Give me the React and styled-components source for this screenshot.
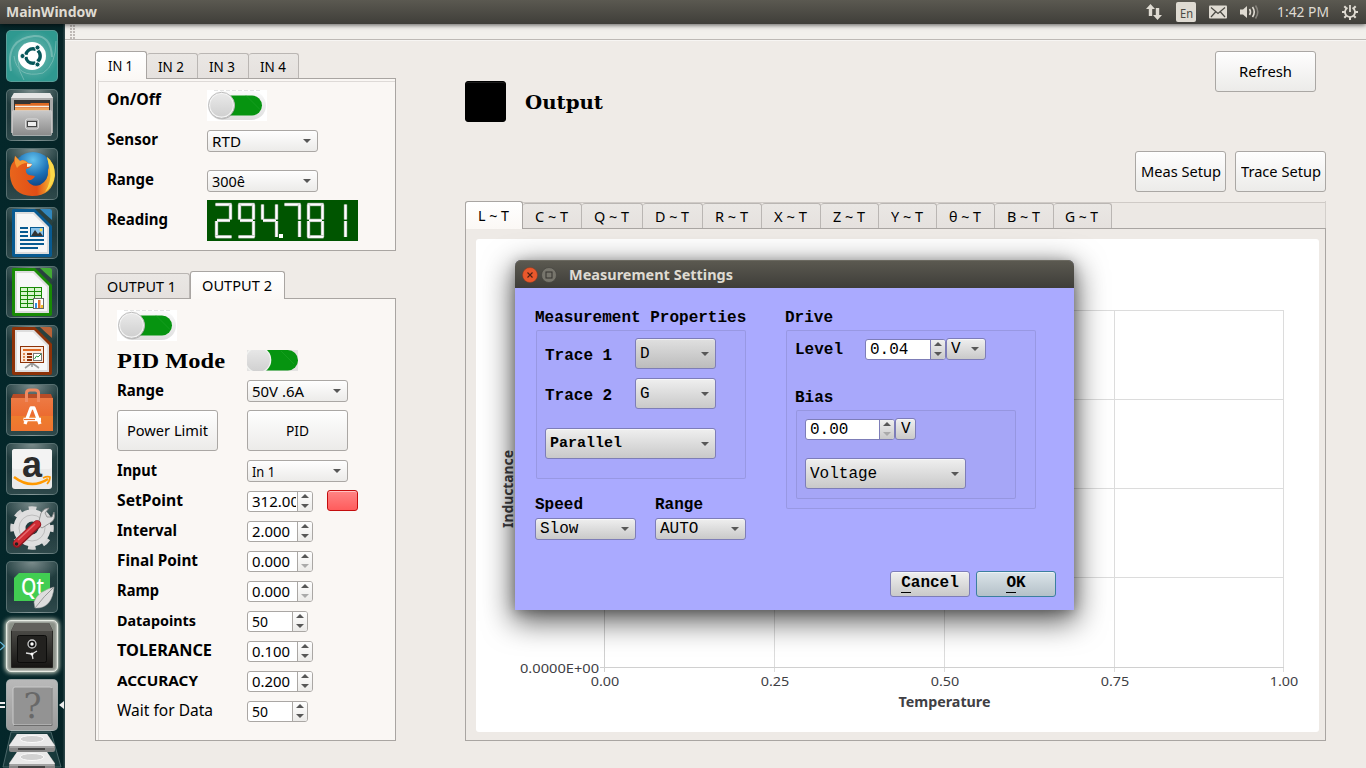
import React, { useLayoutEffect, useRef, useState } from "react";
import styled, { createGlobalStyle, css } from "styled-components";

const ui = `"Noto Sans", "Open Sans", sans-serif`;
const mono = `"Liberation Mono", monospace`;

const GlobalStyle = createGlobalStyle`
  * { box-sizing: border-box; }
  body { margin: 0; background: #efebe7; font-family: ${ui}; font-size: 14.5px; color: #000; overflow: hidden; }
  svg { display: block; flex: none; }
`;

/* ---------- text that is fitted to a given width ---------- */
const FitBox = styled.span`
  display: block;
  flex: none;
  width: ${(p) => p.$w}px;
  white-space: nowrap;
  line-height: 20px;
  font-family: ${(p) => p.$font || "inherit"};
  font-size: ${(p) => (p.$size ? p.$size + "px" : "inherit")};
  font-weight: ${(p) => (p.$bold ? 700 : "inherit")};
  margin-top: ${(p) => p.$dy || 0}px;
`;
const FitInner = styled.span`
  display: inline-block;
  transform-origin: 0 50%;
`;
function Fit({ w, children, bold, size, font, dy }) {
  const ref = useRef(null);
  const [k, setK] = useState(1);
  useLayoutEffect(() => {
    setK(w / ref.current.getBoundingClientRect().width);
  }, [w]);
  return (
    <FitBox $w={w} $bold={bold} $size={size} $font={font} $dy={dy}>
      <FitInner ref={ref} style={{ transform: `scaleX(${k})` }}>{children}</FitInner>
    </FitBox>
  );
}

/* ---------- frame of the desktop ---------- */
const Screen = styled.div`
  width: 1366px;
  height: 768px;
  display: flex;
  flex-direction: column;
  position: relative;
  overflow: hidden;
`;
const TopBar = styled.header`
  height: 24px;
  flex: none;
  display: flex;
  align-items: center;
  padding: 0 8px 0 6px;
  color: #dfdbd2;
  background: linear-gradient(#5b5951, #3f3e39);
  box-shadow: 0 1px 5px rgba(0, 0, 0, 0.65);
  z-index: 2;
`;
const Tray = styled.div`
  margin-left: auto;
  display: flex;
  align-items: center;
`;
const Lang = styled.span`
  width: 20px;
  height: 20px;
  margin: 0 13px 0 13px;
  border-radius: 2px;
  background: #dfdbd2;
  color: #4a4943;
  display: flex;
  justify-content: center;
`;
const SoundIcon = styled.svg`
  margin-left: 13px;
`;
const Clock = styled.div`
  margin: 0 13px 0 17px;
`;
const Desk = styled.div`
  flex: 1;
  display: flex;
  min-height: 0;
`;
const Launcher = styled.nav`
  width: 65px;
  flex: none;
  padding: 6px 0 0 0;
  background: linear-gradient(90deg, #04272a, #062427 96%, #334b4d);
  display: flex;
  flex-direction: column;
  gap: 7px;
  overflow: hidden;
`;
const tileBg = {
  dash: "radial-gradient(circle at 50% 50%, #79bdb6, #2f9990 75%)",
  unknown: "linear-gradient(#b9b9b9, #9b9b9b)",
  plain: "radial-gradient(ellipse 60% 42% at 50% 0, #7b8c8c, rgba(60,85,86,.25) 100%), linear-gradient(#183638, #173235 55%, #2a4547)",
};
const Tile = styled.div`
  width: 52px;
  height: 52px;
  flex: none;
  margin-left: 6px;
  border-radius: 5px;
  border: 1px solid ${(p) => (p.$active ? "#e7ece4" : "rgba(150,170,170,.42)")};
  background: ${(p) => tileBg[p.$kind] || tileBg.plain};
  display: flex;
  align-items: center;
  justify-content: center;
  position: relative;
  ${(p) => p.$active && css`background: #8b9188; box-shadow: 0 0 4px 1px #d9dfd0, inset 0 0 3px #fff;`}
`;
const Stack = styled.div`
  margin-top: -7px;
`;
const Marker = styled.svg`
  position: absolute;
  top: 19px;
  ${(p) => (p.$right ? "right: -8px;" : "left: -7px;")}
`;

/* ---------- main window ---------- */
const Main = styled.main`
  flex: 1;
  display: flex;
  flex-direction: column;
  background: #efebe7;
`;
const ToolStrip = styled.div`
  height: 16px;
  flex: none;
  background: #f2f0ec;
  border-bottom: 1px solid #bdb9b5;
  box-shadow: 0 1px 0 #f7f5f3;
  padding: 1px 5px;
`;
const Grip = styled.div`
  width: 5px;
  height: 14px;
  background: radial-gradient(circle at 1px 1px, #bdb9b5 0.7px, transparent 0.9px) 0 0 / 3px 3px;
`;
const Content = styled.div`
  flex: 1;
  display: flex;
  padding: 11px 40px 27px 30px;
`;
const Side = styled.section`
  width: 301px;
  flex: none;
  display: flex;
  flex-direction: column;
  gap: 20px;
`;
const TabBox = styled.div`
  display: flex;
  flex-direction: column;
  height: ${(p) => p.$h}px;
`;
const TabBar = styled.div`
  display: flex;
  align-items: flex-end;
  height: 28px;
  flex: none;
  margin-bottom: -1px;
  ${(p) => p.$wide && css`
    background: linear-gradient(#cfcac6, #cfcac6) 0 1px / 100% 1px no-repeat, linear-gradient(#ece8e4, #ece8e4) 0 2px / 100% 26px no-repeat;
    border-right: 1px solid #d3cfcb;
  `}
`;
const TabItem = styled.div`
  width: ${(p) => p.$w}px;
  height: 26px;
  flex: none;
  display: flex;
  justify-content: center;
  align-items: center;
  padding: 2px 2px 0 0;
  border: 1px solid #bab6b3;
  border-left-width: ${(p) => (p.$first ? 1 : 0)}px;
  border-bottom-color: #a9a5a2;
  border-radius: 3px 3px 0 0;
  background: linear-gradient(#eae7e4, #e5e1de);
  ${(p) => p.$on && css`
    height: 28px;
    padding: 1px 2px 0 0;
    border: 1px solid #a9a5a2;
    border-bottom: 0;
    background: linear-gradient(#fff, #fbf8f5);
    position: relative;
    z-index: 1;
  `}
`;
const Pane = styled.div`
  flex: 1;
  border: 1px solid #a9a5a2;
  background: ${(p) => (p.$grey ? "#eeeae6" : "#faf7f4")};
  padding: ${(p) => p.$pad || "1px 0 0 2px"};
`;
const Inset = styled.div`
  border-left: 1px solid #dedad7;
  height: 100%;
  padding-left: ${(p) => p.$l}px;
  ${(p) => p.$top && css`background: linear-gradient(#dedad7, #dedad7) 0 1px / 100% 1px no-repeat;`}
`;
const Row = styled.div`
  height: ${(p) => p.$h}px;
  display: grid;
  grid-template-columns: ${(p) => p.$label}px auto auto;
  justify-content: start;
  align-items: center;
`;
const ButtonRow = styled(Row)`
  align-items: start;
  padding-top: 4px;
`;
const SwitchRow = styled.div`
  height: 46px;
  padding-top: 10px;
`;
const SwitchShift = styled.div`
  padding-top: ${(p) => p.$y || 0}px;
  padding-bottom: ${(p) => p.$b || 0}px;
`;

/* ---------- controls ---------- */
const faces = {
  light: "linear-gradient(#fefefe, #ecebe9)",
  grey: "linear-gradient(#efefef, #c9c9c9)",
  dark: "linear-gradient(#e0e0e0, #bcbcbc)",
  ok: "linear-gradient(#dbe4e9, #b4c0c8)",
  red: "linear-gradient(#ff8585, #ff5c5c)",
  black: "#000",
};
const Face = styled.div`
  width: ${(p) => p.$w}px;
  height: ${(p) => p.$h}px;
  flex: none;
  display: flex;
  align-items: center;
  border: 1px solid ${(p) => p.$edge || "#aaa7a4"};
  border-radius: 3px;
  background: ${(p) => faces[p.$face || "light"]};
  box-shadow: inset 0 1px 0 rgba(255, 255, 255, ${(p) => (p.$face === "black" ? 0.1 : 0.5)});
`;
const Combo = styled(Face)`
  justify-content: space-between;
  padding: 0 6px 0 4px;
`;
const Push = styled(Face)`
  justify-content: center;
`;
const Lamp = styled(Face)`
  margin: 0 0 1px 14px;
`;
const Down = styled.i`
  flex: none;
  border: 4px solid transparent;
  border-bottom: 0;
  border-top-color: #575757;
`;
const Up = styled.i`
  flex: none;
  border: 4px solid transparent;
  border-top: 0;
  border-bottom-color: #575757;
`;
const DownDim = styled(Down)`
  border-top-color: #aaa;
`;
const SpinBox = styled(Face)`
  background: #fff;
  overflow: hidden;
`;
const SpinText = styled.div`
  flex: 1;
  min-width: 0;
  overflow: hidden;
  padding-left: 4px;
  margin-right: 1px;
`;
const SpinButtons = styled.div`
  width: 15px;
  height: 100%;
  padding: 0 0 1px 0;
  border-left: 1px solid ${(p) => p.$edge || "#aaa7a4"};
  background: ${(p) => faces[p.$face || "light"]};
  display: flex;
  flex-direction: column;
  align-items: center;
  justify-content: center;
  gap: 6px;
`;

function Select({ w, h = 22, tw, face, edge, children, size, font, bold, dy }) {
  return (
    <Combo $w={w} $h={h} $face={face} $edge={edge}>
      <Fit w={tw} size={size} font={font} bold={bold} dy={dy}>{children}</Fit>
      <Down />
    </Combo>
  );
}
function Spin({ w, tw, face, edge, font, size, dim, children, dy = 1 }) {
  return (
    <SpinBox $w={w} $h={21} $edge={edge}>
      <SpinText><Fit w={tw} font={font} size={size} dy={dy}>{children}</Fit></SpinText>
      <SpinButtons $face={face} $edge={edge}><Up />{dim ? <DownDim /> : <Down />}</SpinButtons>
    </SpinBox>
  );
}
function Toggle() {
  return (
    <svg width="60" height="31" viewBox="0 0 60 31">
      <defs>
        <linearGradient id="knob" x1="0" y1="0" x2="0" y2="1"><stop offset="0" stopColor="#e9e9e9" /><stop offset="1" stopColor="#d0d0d0" /></linearGradient>
        <linearGradient id="rim" x1="0" y1="0" x2="0" y2="1"><stop offset="0" stopColor="#fafafa" /><stop offset="1" stopColor="#dedede" /></linearGradient>
      </defs>
      <rect width="60" height="31" fill="#fff" />
      <rect x="1" y="1" width="58" height="29" rx="14.5" fill="url(#rim)" />
      <path d="M7 .5H54" stroke="#e4e4e4" strokeDasharray="4 2" />
      <rect x="14" y="5.5" width="41" height="20" rx="10" fill="#069410" />
      <path d="M39 5.5l14 14" stroke="#1da025" strokeWidth=".7" />
      <circle cx="15" cy="16.3" r="13" fill="#777" opacity=".4" />
      <circle cx="14.5" cy="15.300" r="13" fill="#f4f4f4" stroke="#bdbdbd" />
      <circle cx="14.5" cy="15.300" r="11.300" fill="url(#knob)" />
    </svg>
  );
}
function SmallToggle() {
  return (
    <svg width="51" height="21" viewBox="0 0 51 21">
      <rect width="51" height="21" fill="#e4e3e2" />
      <rect x="10" y="0" width="41" height="20.5" rx="10.2" fill="#069410" />
      <path d="M34 1l13 13" stroke="#1da025" strokeWidth=".7" />
      <circle cx="11" cy="10" r="13.300" fill="#f1f3f1" />
      <circle cx="11" cy="10" r="12" fill="url(#knob)" />
    </svg>
  );
}

/* Seven segment readout: a top, b/c right, d bottom, e/f left, g middle */
const segmentsOf = { 0: "abcdef", 1: "bc", 2: "abged", 3: "abgcd", 4: "fgbc", 5: "afgcd", 6: "afgedc", 7: "abc", 8: "abcdefg", 9: "abcdfg" };
const segmentLines = {
  a: [0.5, 1.5, 16.5, 1.5], b: [15.5, 1.5, 15.5, 16.5], c: [15.5, 18, 15.5, 34], d: [0.5, 33.8, 16.5, 33.8],
  e: [1.5, 18, 1.5, 34], f: [1.5, 1.5, 1.5, 16.5], g: [2, 17.4, 15, 17.4],
};
function Readout({ value }) {
  let n = -1;
  return (
    <svg width="151" height="41" role="img" aria-label={value}>
      <rect width="151" height="41" fill="#005500" />
      {value.split("").map((ch, i) => {
        if (ch === ".") return <rect key={i} x={8 + 23 * n + 18} y="34" width="4" height="4" fill="#fff" />;
        n += 1;
        return (
          <g key={i} transform={`translate(${8 + 23 * n} 3)`}>
            {segmentsOf[ch].split("").map((s) => {
              const [x1, y1, x2, y2] = segmentLines[s];
              return (
                <g key={s}>
                  <line x1={x1} y1={y1} x2={x2} y2={y2} stroke="#a3aba3" strokeWidth="3.4" />
                  <line x1={x1} y1={y1} x2={x2} y2={y2} stroke="#fff" strokeWidth="2.2" />
                </g>
              );
            })}
          </g>
        );
      })}
    </svg>
  );
}

/* ---------- right side ---------- */
const Work = styled.section`
  flex: 1;
  margin-left: 69px;
  display: flex;
  flex-direction: column;
`;
const Head = styled.div`
  height: 100px;
  flex: none;
  display: flex;
  align-items: flex-start;
`;
const OutputMark = styled.div`
  display: flex;
  align-items: center;
  gap: 19px;
  padding-top: 30px;
  flex: 1;
`;
const RefreshSlot = styled.div`
  margin-right: 10px;
`;
const Setup = styled.div`
  height: 50px;
  flex: none;
  display: flex;
  justify-content: flex-end;
  gap: 9px;
`;

const gridX = [604.5, 774.5, 944.5, 1114.5, 1283.5];
const gridY = [310.5, 399.5, 488.5, 577.5, 667.5];
const ticks = ["0.00", "0.25", "0.50", "0.75", "1.00"];
function Chart() {
  return (
    <svg width="843" height="493" viewBox="476 239 843 493" fontFamily={ui} fontSize="13.4" fill="#404044">
      <rect x="476" y="239" width="843" height="493" rx="3" fill="#fff" />
      <g stroke="#dcdcdc" strokeWidth="1">
        {gridX.map((x) => <line key={x} x1={x} x2={x} y1="310" y2="672" />)}
        {gridY.map((y) => <line key={y} x1="600" x2="1284" y1={y} y2={y} />)}
        <path d="M600 667.5H1284M604.5 310V672" stroke="#d0d0d0" />
      </g>
      {ticks.map((t, i) => <text key={t} x={gridX[i] + 0.5} y="686" textAnchor="middle" textLength="28.5" lengthAdjust="spacingAndGlyphs">{t}</text>)}
      <text x="520" y="673" textLength="79" lengthAdjust="spacingAndGlyphs">0.0000E+00</text>
      <text x="944.5" y="707" fontWeight="700" textAnchor="middle" textLength="92" lengthAdjust="spacingAndGlyphs">Temperature</text>
      <text transform="translate(513 489) rotate(-90)" fontWeight="700" textAnchor="middle" textLength="78" lengthAdjust="spacingAndGlyphs">Inductance</text>
    </svg>
  );
}

/* ---------- dialog ---------- */
const Dialog = styled.div`
  position: absolute;
  left: 515px;
  top: 260px;
  width: 559px;
  height: 350px;
  z-index: 3;
  border-radius: 6px 6px 0 0;
  background: #aaaaff;
  box-shadow: 0 9px 30px 2px rgba(0, 0, 0, 0.66), 0 2px 12px rgba(0, 0, 0, 0.25);
  font-family: ${mono};
  font-size: 16px;
`;
const TitleBar = styled.div`
  height: 28px;
  display: flex;
  align-items: center;
  padding: 1px 0 0 7px;
  gap: 3px;
  color: #dfdbd2;
  border-radius: 6px 6px 0 0;
  background: linear-gradient(#5c5a51, #3e3d39);
  box-shadow: inset 0 1px 0 #6b6960;
  font-family: ${ui};
`;
const Title = styled.div`
  margin-left: 9px;
`;
const DialogBody = styled.div`
  height: 322px;
  display: flex;
  flex-direction: column;
  justify-content: space-between;
  padding: 19px 18px 13px 20px;
`;
const Columns = styled.div`
  display: grid;
  grid-template-columns: 211px 251px;
  column-gap: 39px;
`;
const Caption = styled.div`
  height: 20px;
  line-height: ${(p) => p.$lh || 22}px;
  font-weight: 700;
  white-space: nowrap;
`;
const Group = styled.div`
  width: ${(p) => p.$w}px;
  height: ${(p) => p.$h}px;
  margin: 3px 0 0 1px;
  padding: ${(p) => p.$pad};
  border: 1px solid rgba(90, 90, 130, 0.2);
  border-radius: 2px;
  background: rgba(100, 100, 150, 0.035);
`;
const Line = styled.div`
  display: flex;
  align-items: center;
  height: ${(p) => p.$h}px;
`;
const LineLabel = styled(Caption)`
  width: ${(p) => p.$w}px;
`;
const Pair = styled.div`
  display: flex;
  gap: ${(p) => p.$gap}px;
  margin-top: ${(p) => p.$top}px;
`;
const Actions = styled.div`
  display: flex;
  justify-content: flex-end;
  gap: 6px;
  font-weight: 700;
`;
const Key = styled.span`
  border-bottom: 1px solid #000;
  padding-bottom: 0;
`;
const Word = styled.span`
  line-height: 18px;
  margin-top: -2px;
`;
const purple = "#7d7db8";

/* ---------- launcher drawings ---------- */
function Dash() {
  return (
    <svg width="50" height="50" viewBox="0 0 50 50">
      <g fill="none" stroke="#a3d1cb" opacity=".5"><path d="M4 40Q-2 8 27 5Q44 4 45 26" strokeWidth="2" /><path d="M7 25Q10 48 36 42Q49 34 49 10M17 49Q5 30 18 12" /></g>
      <circle cx="25" cy="25" r="14" fill="#fff" />
      <circle cx="26" cy="25" r="7.2" fill="none" stroke="#07575a" strokeWidth="3.4" strokeDasharray="13 2.1" strokeDashoffset="6.5" />
      <g fill="#07575a" stroke="#fff" strokeWidth=".9"><circle cx="15.5" cy="25" r="2.5" /><circle cx="30.5" cy="16.5" r="2.5" /><circle cx="30.5" cy="33.5" r="2.5" /></g>
    </svg>
  );
}
function Files() {
  return (
    <svg width="50" height="50" viewBox="0 0 50 50">
      <defs><linearGradient id="cab" x1="0" y1="0" x2="0" y2="1"><stop offset="0" stopColor="#c9c9c9" /><stop offset="1" stopColor="#8a8a8a" /></linearGradient></defs>
      <path d="M7 3H43L46 8V43H4V8Z" fill="#aaa" /><path d="M7 3H43L46 8H4Z" fill="#e6e6e6" />
      <rect x="7" y="10" width="36" height="13" fill="#343434" />
      <path d="M8 14h15l1-1h18v12H8z" fill="#df6a23" /><path d="M8 16.500H42" stroke="#f5efe5" strokeWidth="1.4" /><path d="M8 18H42V23H8Z" fill="#f0a45c" />
      <rect x="5.500" y="20.500" width="39" height="25" rx="1" fill="url(#cab)" stroke="#d9d9d9" strokeWidth=".6" />
      <rect x="18.500" y="29" width="13" height="10" rx="2" fill="#aaa" stroke="#ddd" /><rect x="20.500" y="31.500" width="9" height="5" fill="#eee" stroke="#444" />
    </svg>
  );
}
function Firefox() {
  return (
    <svg width="50" height="50" viewBox="0 0 50 50">
      <defs>
        <radialGradient id="globe" cx=".5" cy=".2" r=".8"><stop offset="0" stopColor="#63c3ee" /><stop offset=".5" stopColor="#1c6fb5" /><stop offset="1" stopColor="#0b2f6b" /></radialGradient>
        <linearGradient id="fox" x1="0" y1="0" x2="1" y2="0"><stop offset="0" stopColor="#e8651c" /><stop offset=".6" stopColor="#e24e16" /><stop offset="1" stopColor="#fbd23a" /></linearGradient>
      </defs>
      <circle cx="26" cy="23" r="20" fill="url(#globe)" />
      <path d="M40 8Q48 14 48 26Q46 47 25 47Q5 46 3 27Q2 17 7 12L8 7L13 12Q18 10 21 14L25 15Q24 19 19 20Q18 24 22 26L28 27Q26 32 20 31Q25 39 33 36Q42 31 41 21Q43 18 40 8Z" fill="url(#fox)" />
      <path d="M40 8Q48 14 47.500 27Q46 37 38 43Q45 32 43 21Z" fill="#fbd94a" />
      <path d="M8 7L13 12Q17 10 21 14Q14 14 10 19Q7 14 8 7Z" fill="#f79a34" />
      <path d="M20 14.500L25 15Q24 18 20 18Z" fill="#fff0d0" />
    </svg>
  );
}
function Office({ c, d, kind }) {
  return (
    <svg width="50" height="50" viewBox="0 0 50 50">
      <path d="M5 2Q5 1 7 1H29L45 17V47Q45 49 43 49H7Q5 49 5 47Z" fill={c} />
      <path d="M8 4H27L42 19V46H8Z" fill="#ddd" /><path d="M10 6H26L40 20V44H10Z" fill="#f7f7f7" />
      <path d="M28 1H43Q45 1 45 3V18Z" fill="#29413f" />
      <path d="M33 1H43Q45 1 45 3V12Q38 6 33 1Z" fill={d} />
      {kind === "writer" && <g><path d="M13 20h8M13 24h8M13 28h8M13 32h24M13 36h24M13 40h18" stroke={c} strokeWidth="2" /><rect x="23.500" y="19.500" width="13" height="9" fill="#8bc3ea" stroke={c} /><path d="M24 28l4-6 3 4 2-2 3 4z" fill="#333" /><circle cx="34" cy="22" r="1.400" fill="#ffdc4a" /></g>}
      {kind === "calc" && <g><rect x="13.500" y="20.500" width="21" height="20" fill="#d8f5cd" stroke={c} /><path d="M13 24.500h22M13 28.500h22M13 32.500h22M13 36.500h22M20.500 20v21M27.500 20v21" stroke={c} /><rect x="26.500" y="31.500" width="10" height="10" fill="#fff" stroke="#666" /><path d="M28 36h2v5h-2z" fill="#2f8de0" /><path d="M31 33h2.500v8H31z" fill="#e0702a" /><path d="M34 38h2v3h-2z" fill="#f5bf2b" /></g>}
      {kind === "impress" && <g><path d="M25 37l-7 5M25 37l7 5M25 36v5" stroke="#999" strokeWidth="1.600" /><rect x="13.500" y="20.500" width="23" height="16" fill="#fbe9dc" stroke={c} /><path d="M16 24h18" stroke="#df6a23" strokeWidth="2" /><path d="M16 28h2M16 31h2M16 34h2" stroke="#df8a53" strokeWidth="2" /><path d="M20 28h5M20 31h5M20 34h5" stroke={c} strokeWidth="2" /><rect x="26.500" y="27.500" width="8" height="7" fill="#fff" stroke="#777" /><path d="M27.500 33l2-3 1.500 1 3-3" fill="none" stroke="#1f9a3c" /></g>}
    </svg>
  );
}
function Software() {
  return (
    <svg width="50" height="50" viewBox="0 0 50 50">
      <defs><linearGradient id="bag" x1="0" y1="0" x2="0" y2="1"><stop offset="0" stopColor="#ed7a44" /><stop offset=".55" stopColor="#ec6b30" /><stop offset=".56" stopColor="#ee7d2e" /><stop offset="1" stopColor="#ee7430" /></linearGradient></defs>
      <path d="M6 9H44L46 14H4Z" fill="#b74c27" /><rect x="4" y="13" width="42" height="33" fill="url(#bag)" />
      <path d="M19.500 17V8Q19.500 5 23 5H28Q31.500 5 31.500 8V17" fill="none" stroke="#ef8b63" strokeWidth="3" />
      <path d="M18 39L24 23H27L33 39M16.500 34.500H34" fill="none" stroke="#fff" strokeWidth="3.300" strokeLinejoin="round" /><path d="M17 34.500H28" stroke="#ec7230" strokeWidth="1.200" />
    </svg>
  );
}
function Amazon() {
  return (
    <svg width="50" height="50" viewBox="0 0 50 50">
      <rect x="5" y="5" width="40" height="40" rx="3" fill="#eaeaea" /><rect x="5" y="5" width="40" height="20" rx="3" fill="#f3f3f3" />
      <text x="25" y="33" textAnchor="middle" fontFamily={`"Liberation Sans", sans-serif`} fontWeight="700" fontSize="36" fill="#2b2b2b">a</text>
      <path d="M7 33Q24 46 41 35" fill="none" stroke="#f90" strokeWidth="2.600" /><path d="M36 34Q40 32 43 33Q43 37 40 40" fill="none" stroke="#f90" strokeWidth="1.700" />
    </svg>
  );
}
function Tools() {
  return (
    <svg width="50" height="50" viewBox="0 0 50 50">
      <circle cx="25" cy="25" r="18.800" fill="none" stroke="#d6d6d6" strokeWidth="6" strokeDasharray="7.380 7.380" strokeDashoffset="3.690" />
      <circle cx="25" cy="25" r="12.500" fill="none" stroke="#dfdfdf" strokeWidth="12" />
      <circle cx="25" cy="25" r="13" fill="none" stroke="#bdbdbd" />
      <path d="M31 22L34 10Q37 5 42 5L38 10L40 14L45 14L47 9Q49 17 43 20L35 25Z" fill="#ddd" stroke="#858585" strokeWidth=".8" />
      <path d="M10 40.500L30 21.500" stroke="#8e1720" strokeWidth="8.500" strokeLinecap="round" /><path d="M10 40L30 21" stroke="#ce2c34" strokeWidth="6.500" strokeLinecap="round" />
      <path d="M11 37L28 21" stroke="#e66a6e" strokeWidth="1.500" /><circle cx="9.500" cy="41" r="1.800" fill="#222" />
    </svg>
  );
}
function QtIcon() {
  return (
    <svg width="50" height="50" viewBox="0 0 50 50">
      <path d="M12 11H43V34L38 39H7V16Z" fill="#41cd52" />
      <text x="14" y="33" fontFamily={ui} fontWeight="500" fontSize="23" textLength="23" lengthAdjust="spacingAndGlyphs" fill="#fff">Qt</text>
      <path d="M47 25Q31 29 27 40L28 46Q45 47 47 25Z" fill="#ddd" stroke="#aaa" strokeWidth=".5" /><path d="M47 25Q37 34 28 46" fill="none" stroke="#999" />
    </svg>
  );
}
function Safe() {
  return (
    <svg width="50" height="50" viewBox="0 0 50 50">
      <defs><linearGradient id="safe" x1="0" y1="0" x2="0" y2="1"><stop offset="0" stopColor="#4a4945" /><stop offset="1" stopColor="#171614" /></linearGradient></defs>
      <path d="M8 2H42L46 10V46Q46 47 45 47H5Q4 47 4 46V10Z" fill="#282724" /><path d="M8 2H42L46 10H4Z" fill="#62615d" />
      <rect x="5" y="10" width="40" height="36" fill="url(#safe)" /><rect x="10.500" y="14.500" width="29" height="27" rx="2" fill="#22211f" stroke="#0c0c0b" />
      <circle cx="25" cy="23" r="4" fill="#111" stroke="#ccc" strokeWidth="1.300" /><circle cx="25" cy="23" r="1.700" fill="#fff" />
      <path d="M25 33L19 32M25 33L30 30M25 33L26 38" stroke="#ddd" strokeWidth="1.300" /><circle cx="25" cy="33" r="1.500" fill="#fff" />
    </svg>
  );
}
function Unknown() {
  return (
    <svg width="50" height="50" viewBox="0 0 50 50">
      <rect x="6" y="7" width="39" height="38" rx="2" fill="#939393" stroke="#c9c9c9" /><path d="M7 45.500H45V8" fill="none" stroke="#6d6d6d" />
      <text x="25.500" y="38" textAnchor="middle" fontFamily={`"DejaVu Serif", serif`} fontSize="36" textLength="18" lengthAdjust="spacingAndGlyphs" fill="#686868">?</text>
    </svg>
  );
}
function Drives() {
  return (
    <svg width="65" height="44" viewBox="0 0 65 44">
      <path d="M11 1H51L61 36H3Z" fill="#17393b" stroke="#4a6769" />
      {[0, 18].map((y) => (
        <g key={y} transform={`translate(0 ${y})`}>
          <path d="M17 3H47L55 14V19Q55 21 53 21H11Q9 21 9 19V14Z" fill="#888" />
          <path d="M17 3H47L55 15H9Z" fill="#e9e9e9" /><ellipse cx="32" cy="8" rx="12" ry="3.500" fill="#d1d1d1" stroke="#fafafa" />
          <path d="M10 16H54" stroke="#bdbdbd" /><path d="M18 18H45" stroke="#444" strokeWidth="2" />
        </g>
      ))}
    </svg>
  );
}

function TrayIcons() {
  return (
    <>
      <svg width="18" height="18" viewBox="0 0 18 18" fill="#dfdbd2"><path d="M5.500 1L10 6H7.200V13H3.800V6H1Z" /><path d="M12.500 17L8 12H10.800V5H14.200V12H17Z" /></svg>
      <Lang><Fit w={13} size={13} dy={1}>En</Fit></Lang>
      <svg width="18" height="14" viewBox="0 0 18 14"><rect width="18" height="13" y=".5" rx="1" fill="#dfdbd2" /><path d="M2 2.500L9 8.500L16 2.500M2 12L6.500 7M16 12L11.500 7" fill="none" stroke="#4a4943" strokeWidth="1.200" /></svg>
      <SoundIcon width="20" height="16" viewBox="0 0 20 16"><path d="M0 5.500H3L7 2V14L3 10.500H0Z" fill="#dfdbd2" /><path d="M9.500 5Q11.500 8 9.500 11M12.500 3Q16 8 12.500 13" fill="none" stroke="#dfdbd2" strokeWidth="1.600" /><path d="M15.500 1.500Q20 8 15.500 14.500" fill="none" stroke="#85827b" strokeWidth="1.600" /></SoundIcon>
      <Clock><Fit w={52} size={14}>1:42 PM</Fit></Clock>
      <svg width="16" height="16" viewBox="0 0 16 16" fill="none" stroke="#dfdbd2"><path d="M5.500 3.700A5 5 0 1 0 10.500 3.700" strokeWidth="1.800" /><path d="M8 1V8" strokeWidth="1.800" /><path d="M0 8H3M13 8H16M8 13V16M2.300 2.300L4.300 4.300M13.700 2.300L11.700 4.300M2.300 13.700L4.300 11.700M13.700 13.700L11.700 11.700" strokeWidth="2" /></svg>
    </>
  );
}

const inputTabs = [["IN 1", 52, 25], ["IN 2", 51, 26], ["IN 3", 51, 26], ["IN 4", 50, 26]];
const traceTabs = [["L", 58, 31], ["C", 59, 33], ["Q", 61, 35], ["D", 60, 34], ["R", 59, 33], ["X", 59, 33], ["Z", 58, 32], ["Y", 58, 32], ["θ", 58, 32], ["B", 59, 33], ["G", 58, 33]];
const spins = [
  ["Interval", 60, 16, "2.000", 66, 38], ["Final Point", 81, 16, "0.000", 66, 38, true], ["Ramp", 42, 16, "0.000", 66, 38, true],
  ["Datapoints", 79, 14.2, "50", 61, 16], ["TOLERANCE", 95, 16, "0.100", 66, 38], ["ACCURACY", 81, 14.2, "0.200", 66, 38],
];

export default function App() {
  return (
    <Screen>
      <GlobalStyle />
      <TopBar>
        <Fit w={91} bold size={14}>MainWindow</Fit>
        <Tray><TrayIcons /></Tray>
      </TopBar>
      <Desk>
        <Launcher>
          <Tile $kind="dash"><Dash /></Tile>
          <Tile><Files /></Tile>
          <Tile><Firefox /></Tile>
          <Tile><Office kind="writer" c="#085a91" d="#3187bd" /></Tile>
          <Tile><Office kind="calc" c="#188a05" d="#43aa35" /></Tile>
          <Tile><Office kind="impress" c="#8d3208" d="#b96338" /></Tile>
          <Tile><Software /></Tile>
          <Tile><Amazon /></Tile>
          <Tile><Tools /></Tile>
          <Tile><QtIcon /></Tile>
          <Tile $active><Safe /><Marker width="7" height="12" viewBox="0 0 7 12"><path d="M0 2L4.500 6L0 10" fill="none" stroke="#67b6d6" strokeWidth="1.300" /></Marker></Tile>
          <Tile $kind="unknown"><Unknown />
            <Marker width="6" height="12" viewBox="0 0 6 12"><path d="M0 4H5M0 8H5" stroke="#eee" strokeWidth="2" /></Marker>
            <Marker $right width="7" height="12" viewBox="0 0 7 12"><path d="M1 6L6 2V10Z" fill="#eee" /></Marker>
          </Tile>
          <Stack><Drives /></Stack>
        </Launcher>
        <Main>
          <ToolStrip><Grip /></ToolStrip>
          <Content>
            <Side>
              <TabBox $h={200}>
                <TabBar>
                  {inputTabs.map(([t, w, tw], i) => <TabItem key={t} $w={w} $on={i === 0}><Fit w={tw} size={14.4}>{t}</Fit></TabItem>)}
                </TabBar>
                <Pane>
                  <Inset $l={8} $top>
                    <Row $h={40} $label={100}><Fit w={54} bold size={16} dy={-3}>On/Off</Fit><SwitchShift $y={10}><Toggle /></SwitchShift></Row>
                    <Row $h={40} $label={100}><Fit w={51} bold size={16} dy={-2}>Sensor</Fit><SwitchShift $y={2}><Select w={111} tw={29} size={14.4} dy={1}>RTD</Select></SwitchShift></Row>
                    <Row $h={40} $label={100}><Fit w={47} bold size={16} dy={-2}>Range</Fit><SwitchShift $y={2}><Select w={111} tw={33} size={14.4} dy={1}>300ê</Select></SwitchShift></Row>
                    <Row $h={40} $label={100}><Fit w={61} bold size={16} dy={-3}>Reading</Fit><Readout value="294.781" /></Row>
                  </Inset>
                </Pane>
              </TabBox>
              <TabBox $h={470}>
                <TabBar>
                  <TabItem $w={95} $first><Fit w={69} size={14.4}>OUTPUT 1</Fit></TabItem>
                  <TabItem $w={95} $on><Fit w={70} size={14.4}>OUTPUT 2</Fit></TabItem>
                </TabBar>
                <Pane>
                  <Inset $l={18}>
                    <SwitchRow><Toggle /></SwitchRow>
                    <Row $h={30} $label={130}><Fit w={108} bold size={22} font={`"Liberation Serif", serif`}>PID Mode</Fit><SwitchShift $b={1}><SmallToggle /></SwitchShift></Row>
                    <Row $h={30} $label={130}><Fit w={47} bold size={16} dy={-2}>Range</Fit><Select w={101} tw={52} size={14.4} dy={1}>50V .6A</Select></Row>
                    <ButtonRow $h={50} $label={130}>
                      <Push $w={101} $h={41}><Fit w={81} size={14.4}>Power Limit</Fit></Push>
                      <Push $w={101} $h={41}><Fit w={23} size={14.4}>PID</Fit></Push>
                    </ButtonRow>
                    <Row $h={30} $label={130}><Fit w={40} bold size={16} dy={-2}>Input</Fit><Select w={101} tw={23} size={14.4} dy={1}>In 1</Select></Row>
                    <Row $h={30} $label={130}><Fit w={66} bold size={16} dy={-2}>SetPoint</Fit><Spin w={66} tw={47} size={14.4}>312.00</Spin><Lamp $w={31} $h={21} $face="red" $edge="#c40d0d" /></Row>
                    {spins.map(([t, w, s, v, sw, tw, dim]) => (
                      <Row key={t} $h={30} $label={130}><Fit w={w} bold size={s} dy={s === 16 ? -2 : 0}>{t}</Fit><Spin w={sw} tw={tw} size={14.4} dim={dim}>{v}</Spin></Row>
                    ))}
                    <Row $h={30} $label={130}><Fit w={96} size={16} dy={-2}>Wait for Data</Fit><Spin w={61} tw={16} size={14.4}>50</Spin></Row>
                  </Inset>
                </Pane>
              </TabBox>
            </Side>
            <Work>
              <Head>
                <OutputMark><Face $w={41} $h={41} $face="black" $edge="#000" /><Fit w={78} bold size={19} font={`"DejaVu Serif", serif`}>Output</Fit></OutputMark>
                <RefreshSlot><Push $w={101} $h={41}><Fit w={53} size={14.4}>Refresh</Fit></Push></RefreshSlot>
              </Head>
              <Setup>
                <Push $w={91} $h={41}><Fit w={80} size={14.4}>Meas Setup</Fit></Push>
                <Push $w={91} $h={41}><Fit w={80} size={14.4}>Trace Setup</Fit></Push>
              </Setup>
              <TabBox $h={540}>
                <TabBar $wide>
                  {traceTabs.map(([t, w, tw], i) => <TabItem key={t} $w={w} $on={i === 0}><Fit w={tw} size={13.6}>{t} ~ T</Fit></TabItem>)}
                </TabBar>
                <Pane $grey $pad="10px 0 0 10px"><Chart /></Pane>
              </TabBox>
            </Work>
          </Content>
        </Main>
      </Desk>
      <Dialog>
        <TitleBar>
          <svg width="16" height="16" viewBox="0 0 16 16"><circle cx="8" cy="8" r="7.500" fill="#e9582c" stroke="#8a3a20" strokeWidth=".5" /><path d="M5.500 5.500l5 5M10.500 5.500l-5 5" stroke="#4c2014" strokeWidth="1.100" /></svg>
          <svg width="16" height="16" viewBox="0 0 16 16"><circle cx="8" cy="8" r="7.500" fill="#77756c" stroke="#45443f" strokeWidth=".7" /><rect x="5" y="5" width="6" height="6" fill="none" stroke="#34332e" /></svg>
          <Title><Fit w={164} bold size={14}>Measurement Settings</Fit></Title>
        </TitleBar>
        <DialogBody>
          <Columns>
            <div>
              <Caption>Measurement Properties</Caption>
              <Group $w={210} $h={149} $pad="7px 0 0 8px">
                <Line $h={31}><LineLabel $w={90} $lh={24}>Trace 1</LineLabel><Select w={81} h={31} tw={9.6} face="dark" edge={purple}>D</Select></Line>
                <Pair $top={9}><Line $h={31}><LineLabel $w={90} $lh={24}>Trace 2</LineLabel><Select w={81} h={31} tw={9.6} face="grey" edge={purple}>G</Select></Line></Pair>
                <Pair $top={19}><Select w={171} h={31} tw={72} size={15} bold face="grey" edge={purple} dy={1}>Parallel</Select></Pair>
              </Group>
              <Pair $top={15} $gap={19}>
                <div><LineLabel $w={101}>Speed</LineLabel><Pair $top={4}><Select w={101} tw={38.4} face="grey" edge={purple}>Slow</Select></Pair></div>
                <div><LineLabel $w={91}>Range</LineLabel><Pair $top={4}><Select w={91} tw={38.4} face="grey" edge={purple}>AUTO</Select></Pair></div>
              </Pair>
            </div>
            <div>
              <Caption>Drive</Caption>
              <Group $w={250} $h={179} $pad="7px 0 0 8px">
                <Line $h={22}><LineLabel $w={70}>Level</LineLabel><Spin w={81} tw={38.4} face="grey" edge={purple} font={mono}>0.04</Spin><Select w={40} tw={9.6} face="grey" edge={purple} dy={-1}>V</Select></Line>
                <Pair $top={27}><Caption>Bias</Caption></Pair>
                <Group $w={220} $h={89} $pad="7px 0 0 8px">
                  <Line $h={22}><Spin w={90} tw={38.4} face="grey" edge={purple} font={mono} dim>0.00</Spin><Push $w={21} $h={22} $face="grey" $edge={purple}><Fit w={9.6} dy={-1}>V</Fit></Push></Line>
                  <Pair $top={18}><Select w={161} h={31} tw={67.2} face="grey" edge={purple}>Voltage</Select></Pair>
                </Group>
              </Group>
            </div>
          </Columns>
          <Actions>
            <Push $w={80} $h={26} $face="grey" $edge={purple}><Word><Key>C</Key>ancel</Word></Push>
            <Push $w={80} $h={26} $face="ok" $edge="#3c7f9f"><Word><Key>O</Key>K</Word></Push>
          </Actions>
        </DialogBody>
      </Dialog>
    </Screen>
  );
}
